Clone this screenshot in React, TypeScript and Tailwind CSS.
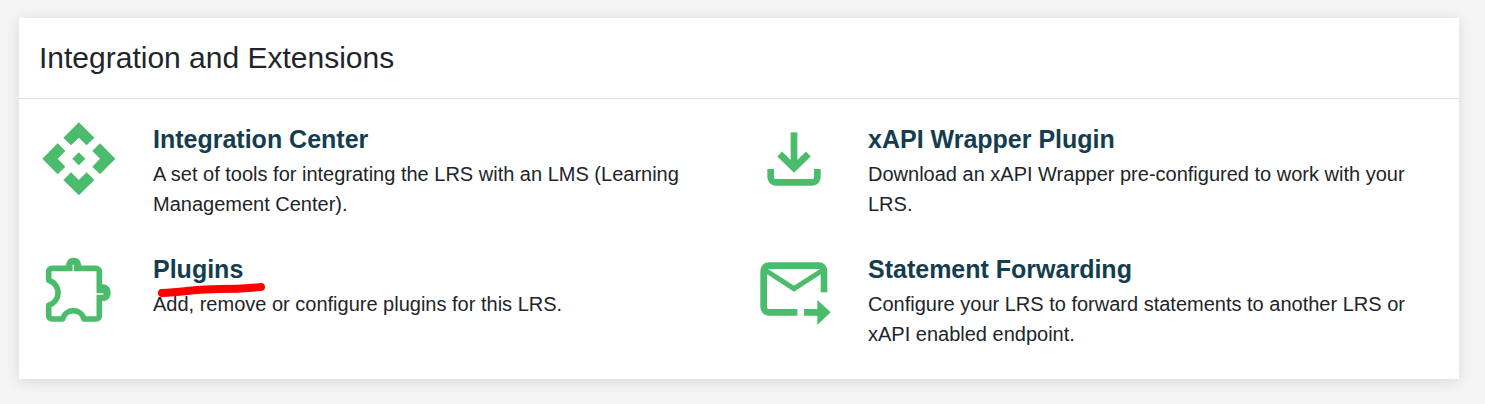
import React from 'react';

const green = '#4abc6b';

const CenterIcon = () => (
  <svg width="114" height="95" viewBox="57 42 342 285" className="overflow-visible">
    <g fill={green}>
      {[0, 90, 180, 270].map((deg) => (
        <polygon
          key={deg}
          points="176.5,37 223,83 200,106 176.5,83 153,106 130,83"
          transform={`rotate(${deg} 176.5 146.5)`}
        />
      ))}
      <polygon points="176.5,127 196,146.5 176.5,166 157,146.5" />
    </g>
  </svg>
);

const PuzzleIcon = () => (
  <svg width="114" height="95" viewBox="-3 6 342 285" className="overflow-visible">
    <path fill={green} d="M72 52 C82 44 74 17 101 17 C128 17 120 44 130 52 Z" />
    <path fill={green} d="M175 94 C183 104 185 97 189 97 C203 97 212 108 212 122 C212 136 203 147 189 147 C185 147 183 140 175 150 Z" />
    <path
      d="M36 49 H168 a10 10 0 0 1 10 10 V191 a10 10 0 0 1 -10 10 H132 A33 33 0 0 0 68 201 H36 a10 10 0 0 1 -10 -10 V160 A39 39 0 0 0 26 85 V59 a10 10 0 0 1 10 -10 Z"
      fill="none"
      stroke={green}
      strokeWidth="17"
      strokeLinejoin="round"
    />
    <path d="M100 38 V62 M165 126 H190" stroke="#ffffff" strokeWidth="4" />
  </svg>
);

const DownloadIcon = () => (
  <svg width="114" height="95" viewBox="27 12 342 285" className="overflow-visible">
    <g fill="none" stroke={green} strokeWidth="20">
      <path d="M147 37 V148" />
      <path d="M104 102 L147 144 L190 102" />
      <path d="M77 147 V172 a15 15 0 0 0 15 15 H202 a15 15 0 0 0 15 -15 V147" />
    </g>
  </svg>
);

const MailIcon = () => (
  <svg width="114" height="95" viewBox="27 12 342 285" className="overflow-visible">
    <g fill="none" stroke={green}>
      <path strokeWidth="20" d="M157 187 H71 a15 15 0 0 1 -15 -15 V62 a15 15 0 0 1 15 -15 H222 a15 15 0 0 1 15 15 V127" />
      <path strokeWidth="15" d="M60 60 L147 116 L234 60" />
    </g>
    <polygon fill={green} points="177,177 217,177 217,150 257,187 217,225 217,197 177,197" />
  </svg>
);

const items = [
  {
    title: 'Integration Center',
    text: 'A set of tools for integrating the LRS with an LMS (Learning Management Center).',
    icon: <CenterIcon />,
  },
  {
    title: 'xAPI Wrapper Plugin',
    text: 'Download an xAPI Wrapper pre-configured to work with your LRS.',
    icon: <DownloadIcon />,
  },
  {
    title: 'Plugins',
    text: 'Add, remove or configure plugins for this LRS.',
    icon: <PuzzleIcon />,
  },
  {
    title: 'Statement Forwarding',
    text: 'Configure your LRS to forward statements to another LRS or xAPI enabled endpoint.',
    icon: <MailIcon />,
  },
];

export default function App() {
  return (
    <div className="relative h-[404px] overflow-hidden bg-[#f5f5f5] pt-[18px] pl-[19px] font-['Liberation_Sans',Arial,sans-serif] text-[#212529]">
      <div className="w-[1440px] h-[361px] bg-white shadow-[0_2px_14px_rgba(0,0,0,0.12)]">
        {/* Header */}
        <div className="h-[81px] border-b border-[#dedede] px-5 flex items-center">
          <h2 className="text-[30px] leading-[80px] font-normal">Integration and Extensions</h2>
        </div>

        {/* Items */}
        <div className="grid grid-cols-2 gap-x-[30px] gap-y-[35px] px-5 pt-[25px]">
          {items.map((item) => (
            <div key={item.title} className="flex h-[95px]">
              <div className="w-[114px] shrink-0">{item.icon}</div>
              <div className="flex-1">
                <h3 className="text-[25px] leading-[30px] font-bold text-[#143d4e] mb-[5px]">{item.title}</h3>
                <p className="text-[20px] leading-[30px] pr-[20px]">{item.text}</p>
              </div>
            </div>
          ))}
        </div>
      </div>

      {/* red marker stroke drawn over the screenshot */}
      <svg className="absolute left-[150px] top-[280px]" width="125" height="22" viewBox="0 0 125 22">
        <path
          d="M12 13 C40 11 50 9 70 9 C90 9 100 8 111 7"
          fill="none"
          stroke="#ff0000"
          strokeWidth="8"
          strokeLinecap="round"
        />
      </svg>
    </div>
  );
}
